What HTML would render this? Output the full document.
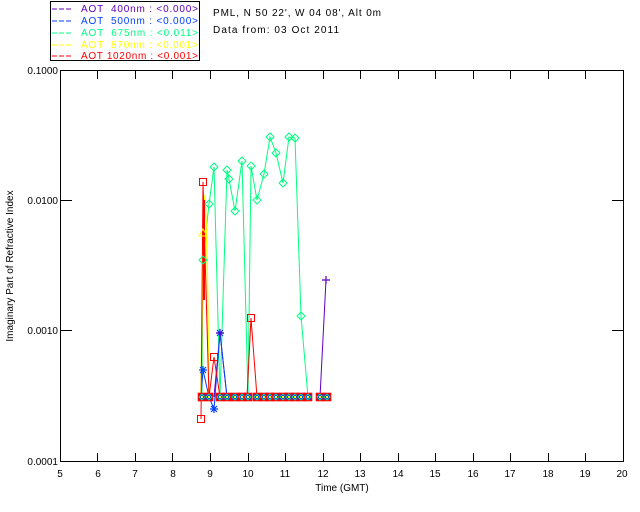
<!DOCTYPE html>
<html><head><style>
html,body{margin:0;padding:0;background:#fff;}
svg{display:block;}
text{font-family:"Liberation Sans",sans-serif;font-size:10px;}
</style></head><body>
<svg width="640" height="512" viewBox="0 0 640 512" xmlns="http://www.w3.org/2000/svg">
<defs>
<g id="bm">
<rect x="-3.5" y="-3.5" width="7" height="7" fill="#0030ff" stroke="#ff0000" stroke-width="1.6"/>
<path d="M0,-3 L3,0 L0,3 L-3,0Z" fill="none" stroke="#00ff80" stroke-width="0.8"/>
<rect x="-1" y="-1" width="2" height="2" fill="#ffff00"/>
</g>
<path id="dia" d="M0,-4 L4,0 L0,4 L-4,0Z" fill="none" stroke="#00ff80" stroke-width="1"/>
</defs>
<rect x="50.5" y="1.5" width="149" height="59" fill="#fff" stroke="#000"/>
<g stroke-width="1" stroke-dasharray="5,2">
<line x1="52" y1="9" x2="72" y2="9" stroke="#6000c0"/>
<line x1="52" y1="21" x2="72" y2="21" stroke="#0040ff"/>
<line x1="52" y1="33" x2="72" y2="33" stroke="#00ff80"/>
<line x1="52" y1="45" x2="72" y2="45" stroke="#ffff00"/>
<line x1="52" y1="56" x2="72" y2="56" stroke="#ff0000"/>
</g>
<text x="81" y="12" fill="#6000c0" xml:space="preserve" textLength="117" lengthAdjust="spacing">AOT  400nm : &lt;0.000&gt;</text>
<text x="81" y="24" fill="#0040ff" xml:space="preserve" textLength="117" lengthAdjust="spacing">AOT  500nm : &lt;0.000&gt;</text>
<text x="81" y="36" fill="#00ff80" xml:space="preserve" textLength="117" lengthAdjust="spacing">AOT  675nm : &lt;0.011&gt;</text>
<text x="81" y="48" fill="#ffff00" xml:space="preserve" textLength="117" lengthAdjust="spacing">AOT  870nm : &lt;0.001&gt;</text>
<text x="81" y="59" fill="#ff0000" xml:space="preserve" textLength="117" lengthAdjust="spacing">AOT 1020nm : &lt;0.001&gt;</text>
<text x="213" y="16" fill="#000" textLength="168" lengthAdjust="spacing">PML, N 50 22', W 04 08', Alt 0m</text>
<text x="213" y="33" fill="#000" textLength="126" lengthAdjust="spacing">Data from: 03 Oct 2011</text>
<rect x="60.5" y="70.5" width="563" height="391" fill="none" stroke="#000"/>
<g stroke="#000">
<line x1="97.5" y1="461" x2="97.5" y2="453"/><line x1="97.5" y1="71" x2="97.5" y2="79"/>
<line x1="135.5" y1="461" x2="135.5" y2="453"/><line x1="135.5" y1="71" x2="135.5" y2="79"/>
<line x1="172.5" y1="461" x2="172.5" y2="453"/><line x1="172.5" y1="71" x2="172.5" y2="79"/>
<line x1="210.5" y1="461" x2="210.5" y2="453"/><line x1="210.5" y1="71" x2="210.5" y2="79"/>
<line x1="248.5" y1="461" x2="248.5" y2="453"/><line x1="248.5" y1="71" x2="248.5" y2="79"/>
<line x1="285.5" y1="461" x2="285.5" y2="453"/><line x1="285.5" y1="71" x2="285.5" y2="79"/>
<line x1="323.5" y1="461" x2="323.5" y2="453"/><line x1="323.5" y1="71" x2="323.5" y2="79"/>
<line x1="360.5" y1="461" x2="360.5" y2="453"/><line x1="360.5" y1="71" x2="360.5" y2="79"/>
<line x1="398.5" y1="461" x2="398.5" y2="453"/><line x1="398.5" y1="71" x2="398.5" y2="79"/>
<line x1="435.5" y1="461" x2="435.5" y2="453"/><line x1="435.5" y1="71" x2="435.5" y2="79"/>
<line x1="473.5" y1="461" x2="473.5" y2="453"/><line x1="473.5" y1="71" x2="473.5" y2="79"/>
<line x1="510.5" y1="461" x2="510.5" y2="453"/><line x1="510.5" y1="71" x2="510.5" y2="79"/>
<line x1="548.5" y1="461" x2="548.5" y2="453"/><line x1="548.5" y1="71" x2="548.5" y2="79"/>
<line x1="585.5" y1="461" x2="585.5" y2="453"/><line x1="585.5" y1="71" x2="585.5" y2="79"/>
<line x1="61" y1="200.5" x2="72" y2="200.5"/><line x1="623" y1="200.5" x2="612" y2="200.5"/>
<line x1="61" y1="330.5" x2="72" y2="330.5"/><line x1="623" y1="330.5" x2="612" y2="330.5"/>
</g>
<g fill="#000" text-anchor="end">
<text x="58" y="74">0.1000</text>
<text x="58" y="204">0.0100</text>
<text x="58" y="334">0.0010</text>
<text x="58" y="465">0.0001</text>
</g>
<g fill="#000" text-anchor="middle">
<text x="60" y="477">5</text><text x="98" y="477">6</text><text x="135" y="477">7</text>
<text x="173" y="477">8</text><text x="210" y="477">9</text><text x="248" y="477">10</text>
<text x="285" y="477">11</text><text x="323" y="477">12</text><text x="360" y="477">13</text>
<text x="398" y="477">14</text><text x="435" y="477">15</text><text x="473" y="477">16</text>
<text x="510" y="477">17</text><text x="548" y="477">18</text><text x="585" y="477">19</text>
<text x="622" y="477">20</text>
<text x="342" y="491">Time (GMT)</text>
<text transform="translate(13,266) rotate(-90)">Imaginary Part of Refractive Index</text>
</g>
<polyline fill="none" stroke="#00ff80" stroke-width="1" points="202,397 203,260 209,204 214,167 220,397 227,170 229,179 235,211 242,161 248,397 251,166 257,200 264,174 270,137 276,153 283,183 289,137 295,138 301,316 308,397"/>
<polyline fill="none" stroke="#6000c0" stroke-width="1" points="214,397 220,333 227,397"/>
<polyline fill="none" stroke="#6000c0" stroke-width="1" points="320,397 326,280"/>
<polyline fill="none" stroke="#0040ff" stroke-width="1" points="201,397 203,370 209,397 214,409 220,333 227,397"/>
<polyline fill="none" stroke="#ffff00" stroke-width="1.5" points="201,397 203,233 205,195 207,250 209,397"/>
<polyline fill="none" stroke="#ff0000" stroke-width="1" points="201,419 203,182 209,397 214,357 220,397 247,397 251,318 257,397 308,397"/>
<line x1="204" y1="200" x2="204" y2="300" stroke="#ff0000" stroke-width="2"/>
<polyline fill="none" stroke="#ff0000" stroke-width="1" points="320,397 327,397"/>
<g>
<use href="#bm" x="202" y="397"/><use href="#bm" x="209" y="397"/><use href="#bm" x="220" y="397"/>
<use href="#bm" x="227" y="397"/><use href="#bm" x="235" y="397"/><use href="#bm" x="242" y="397"/>
<use href="#bm" x="248" y="397"/><use href="#bm" x="257" y="397"/><use href="#bm" x="264" y="397"/>
<use href="#bm" x="270" y="397"/><use href="#bm" x="276" y="397"/><use href="#bm" x="283" y="397"/>
<use href="#bm" x="289" y="397"/><use href="#bm" x="295" y="397"/><use href="#bm" x="301" y="397"/>
<use href="#bm" x="308" y="397"/><use href="#bm" x="320" y="397"/><use href="#bm" x="327" y="397"/>
</g>
<g>
<use href="#dia" x="203" y="260"/><use href="#dia" x="209" y="204"/><use href="#dia" x="214" y="167"/>
<use href="#dia" x="227" y="170"/><use href="#dia" x="229" y="179"/><use href="#dia" x="235" y="211"/>
<use href="#dia" x="242" y="161"/><use href="#dia" x="251" y="166"/><use href="#dia" x="257" y="200"/>
<use href="#dia" x="264" y="174"/><use href="#dia" x="270" y="137"/><use href="#dia" x="276" y="153"/>
<use href="#dia" x="283" y="183"/><use href="#dia" x="289" y="137"/><use href="#dia" x="295" y="138"/>
<use href="#dia" x="301" y="316"/>
</g>
<g fill="none" stroke="#ff0000" stroke-width="1">
<rect x="199.5" y="178.5" width="7" height="7"/>
<rect x="197.5" y="415.5" width="7" height="7"/>
<rect x="210.5" y="353.5" width="7" height="7"/>
<rect x="247.5" y="314.5" width="7" height="7"/>
</g>
<path d="M203,229 L207,236 L199,236Z" fill="none" stroke="#ffff00"/>
<g stroke="#0040ff" stroke-width="1.2">
<path d="M199,370h8M203,366v8M200,367l6,6M206,367l-6,6"/>
<path d="M210,409h8M214,405v8M211,406l6,6M217,406l-6,6"/>
<path d="M216,333h8M220,329v8M217,330l6,6M223,330l-6,6"/>
</g>
<g stroke="#6000c0" stroke-width="1.2">
<path d="M216,333h8M220,329v8"/>
<path d="M322,280h8M326,276v8"/>
</g>
</svg>
</body></html>
